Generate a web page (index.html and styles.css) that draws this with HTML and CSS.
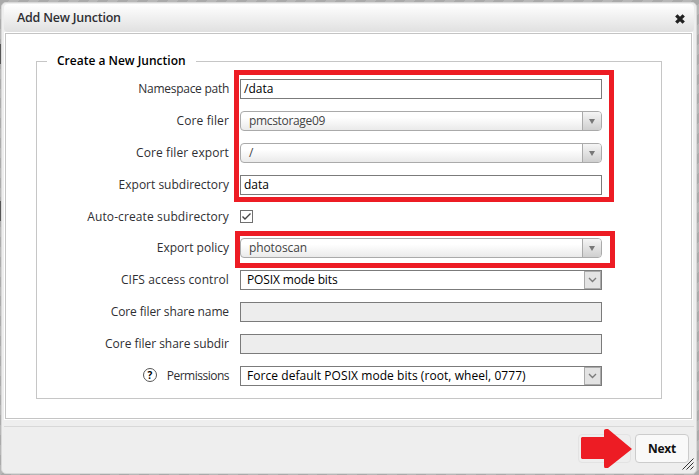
FILE: index.html
```html
<!DOCTYPE html>
<html lang="en">
<head>
<meta charset="utf-8">
<title>Add New Junction</title>
<link rel="stylesheet" href="styles.css">
</head>
<body>
<div class="dialog">
  <header class="titlebar">
    <span class="t-title">Add New Junction</span>
    <svg class="close" width="10" height="10" viewBox="0 0 10 10"><path d="M1.3 1.3 8.7 8.7M8.7 1.3 1.3 8.7" stroke="#222" stroke-width="3.3"/></svg>
  </header>
  <main class="content">
    <fieldset class="group">
      <legend><span class="t-legend">Create a New Junction</span></legend>
      <div class="marked">
        <div class="row"><label class="t-ns">Namespace path</label><div class="field value">/data</div></div>
        <div class="row"><label class="t-filer">Core filer</label><div class="combo"><span class="t-storage">pmcstorage09</span><i class="drop"></i></div></div>
        <div class="row"><label class="t-export">Core filer export</label><div class="combo"><span>/</span><i class="drop"></i></div></div>
        <div class="row"><label class="t-subdir">Export subdirectory</label><div class="field value">data</div></div>
        <div class="outline outline-main"></div>
      </div>
      <div class="row row-check"><label class="t-auto">Auto-create subdirectory</label><div class="check"><svg width="11" height="11" viewBox="0 0 11 11"><path d="M1.5 5.5 4 8 9.5 2.5" fill="none" stroke="#444" stroke-width="1.4"/></svg></div></div>
      <div class="marked">
        <div class="row"><label class="t-policy">Export policy</label><div class="combo"><span class="t-photo">photoscan</span><i class="drop"></i></div></div>
        <div class="outline outline-policy"></div>
      </div>
      <div class="row"><label class="t-cifs">CIFS access control</label><div class="field select"><span class="t-posix">POSIX mode bits</span><b class="arrow"><svg width="9" height="6" viewBox="0 0 9 6"><path d="M1 1 4.5 4.5 8 1" fill="none" stroke="#7c7c7c" stroke-width="1.4"/></svg></b></div></div>
      <div class="row"><label class="t-share">Core filer share name</label><div class="field off"></div></div>
      <div class="row"><label class="t-sharesub">Core filer share subdir</label><div class="field off"></div></div>
      <div class="row"><span class="help">?</span><label class="t-perm">Permissions</label><div class="field select"><span class="t-force">Force default POSIX mode bits (root, wheel, 0777)</span><b class="arrow"><svg width="9" height="6" viewBox="0 0 9 6"><path d="M1 1 4.5 4.5 8 1" fill="none" stroke="#7c7c7c" stroke-width="1.4"/></svg></b></div></div>
    </fieldset>
  </main>
  <footer class="actions">
    <div class="ghost"><svg class="pointer" width="52" height="40" viewBox="0 0 52 40"><path d="M1 8H23V1.5Q23 0 25 0H27L51 20 27 39H24Q23 39 23 37V30H1L0 29V9Z" fill="#ed1c24"/></svg></div>
    <button class="next"><span class="t-next">Next</span></button>
    <svg class="grip" width="12" height="12" viewBox="0 0 12 12"><path d="M.5 11.5 11.5.5M4.5 11.5 11.5 4.5M8.5 11.5 11.5 8.5" stroke="#333" stroke-width="1"/></svg>
  </footer>
</div>
</body>
</html>
```
FILE: styles.css
```css
* { box-sizing: border-box; }
body {
  margin: 0;
  width: 699px;
  height: 475px;
  overflow: hidden;
  padding: 2px 2px 0 1px;
  font: 12px/18px "Open Sans", "Noto Sans", sans-serif;
  color: #2f2f33;
  background:
    linear-gradient(#555, #555) 0 44px / 1px 20px no-repeat,
    linear-gradient(#555, #555) 0 201px / 1px 20px no-repeat,
    repeating-linear-gradient(135deg, #aaa 0 7px, #b7b7b7 7px 14px);
}
span, label { white-space: nowrap; }
.dialog {
  height: 472px;
  border: 1px solid #d8d8d8;
  border-radius: 5px;
  padding: 1px 2px;
  background: #eee;
}
.titlebar {
  display: flex;
  align-items: center;
  justify-content: space-between;
  height: 28px;
  padding: 0 9px 0 13px;
  border-radius: 4px;
  background: linear-gradient(#fff, #e0e0e0);
}
.titlebar .t-title { font-size: 12.5px; font-weight: 600; letter-spacing: -.22px; }
.close { margin-top: 1px; }
.content {
  height: 388px;
  border: 1px solid #fff;
  border-width: 1px 1px 2px;
  margin-right: 1px;
  background: #fff;
  outline: 1px solid #c4c4c4;
  outline-offset: -2px;
  padding: 18px 30px 0 31px;
}
.group {
  width: 626px;
  height: 348px;
  margin: 0;
  padding: 2px 0 0;
  border: 1px solid #c6c6c6;
}
legend {
  height: 20px;
  line-height: 20px;
  margin-left: 10px;
  padding: 0 10px;
  width: 149px;
  color: #000;
  font-weight: 600;
}
.t-ns { letter-spacing: -.27px; }
.t-filer, .t-export, .t-auto, .t-cifs { letter-spacing: .11px; }
.t-share { letter-spacing: -.12px; }
.t-sharesub { letter-spacing: -.03px; }
.t-perm { letter-spacing: -.5px; }
.t-storage { letter-spacing: -.33px; }
.t-photo { letter-spacing: -.1px; }
.t-posix { letter-spacing: -.13px; }
.t-force { letter-spacing: .06px; }
.marked { position: relative; }
.outline { position: absolute; border: 5px solid #ed1c24; width: 380px; }
.outline-main { left: 197px; top: -3px; height: 132px; }
.outline-policy { left: 198px; top: -1px; height: 37px; }
.row { display: flex; align-items: center; height: 32px; }
.row-check { height: 31px; }
.row label { margin-left: auto; flex: none; }
.field, .combo { width: 362px; height: 20px; margin: 0 59px 0 11px; flex: none; }
.field { border: 1px solid #7b7b7b; background: #fff; color: #000; line-height: 18px; }
.value { padding-left: 3px; }
.off { background: #ededed; }
.combo {
  display: flex;
  justify-content: space-between;
  overflow: hidden;
  border: 1px solid #aaa;
  border-radius: 4px;
  padding-left: 8px;
  background: linear-gradient(#fff 30%, #eaeaea);
  color: #444;
}
.drop {
  display: grid;
  place-items: center;
  width: 19px;
  border-left: 1px solid #aaa;
  background: linear-gradient(#f5f5f5, #cfcfcf);
}
.drop::before {
  content: "";
  border: 3.5px solid transparent;
  border-top: 5px solid #777;
  border-bottom: 0;
}
.check { width: 13px; height: 13px; border: 1px solid #707070; margin: -1px 408px 0 11px; flex: none; }
.check svg { display: block; }
.select { display: flex; justify-content: space-between; padding-left: 6px; }
.arrow {
  display: grid;
  place-items: center;
  width: 17px;
  border: 1px solid #aaa;
  background: #e3e3e3;
}
.help {
  width: 14px;
  height: 14px;
  border: 1px solid #555;
  border-radius: 50%;
  margin: -2px 0 0 106px;
  color: #000;
  font-weight: 700;
  font-size: 10px;
  line-height: 12px;
  text-align: center;
}
.actions {
  display: flex;
  position: relative;
  justify-content: flex-end;
  height: 47px;
  margin-top: 6px;
  border-top: 1px solid #d8d8d8;
  padding: 7px 5px 0 0;
}
.ghost { width: 53px; height: 29px; margin-right: 4px; border: 1px solid #e3e3e3; border-radius: 4px; position: relative; }
.pointer { position: absolute; right: -3px; top: -6px; }
.next {
  width: 54px;
  height: 29px;
  padding: 0;
  border: 1px solid #ccc;
  border-radius: 4px;
  background: #f9f9f9;
  color: #111;
  font: 700 12px/18px "Open Sans", sans-serif;
}
.t-next { letter-spacing: -.2px; }
.grip { position: absolute; right: 0; top: 31px; }
```
